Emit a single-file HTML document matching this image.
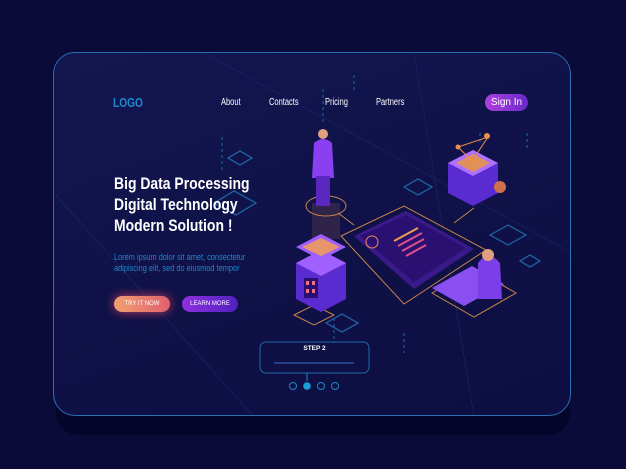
<!DOCTYPE html>
<html><head><meta charset="utf-8"><style>
body{margin:0;width:626px;height:469px;overflow:hidden;background:#0b0b3a;font-family:"Liberation Sans",sans-serif;position:relative}
.shadow{position:absolute;left:56px;top:70px;width:514px;height:365px;border-radius:22px;background:#05052a}
.card{position:absolute;left:53px;top:52px;width:518px;height:364px;border-radius:22px;border:1.5px solid #2a6fb0;background:linear-gradient(160deg,#141650 0%,#0f1148 50%,#0d0f42 100%);box-sizing:border-box;overflow:hidden}
.t{position:absolute;color:#fff;white-space:nowrap;transform-origin:0 0}
</style></head><body>
<div class="shadow"></div>
<div class="card">
<svg width="518" height="364" style="position:absolute;left:0;top:0">
<g stroke="#22307a" stroke-width="0.6" opacity="0.7"><line x1="150" y1="0" x2="518" y2="200"/><line x1="0" y1="140" x2="200" y2="364"/><line x1="360" y1="0" x2="420" y2="364"/></g>
<g fill="none" stroke="#1d6aa8" stroke-width="1.2">
<path d="M350 134 l14 -8 l14 8 l-14 8z"/><path d="M436 182 l18 -10 l18 10 l-18 10z"/><path d="M466 208 l10 -6 l10 6 l-10 6z"/><path d="M160 150 l20 -12 l22 12 l-20 12z"/><path d="M174 105 l12 -7 l12 7 l-12 7z"/><path d="M272 270 l16 -9 l16 9 l-16 9z"/>
</g>
<g stroke="#1d6aa8" stroke-width="1" stroke-dasharray="3 3"><line x1="300" y1="22" x2="300" y2="40"/><line x1="269" y1="36" x2="269" y2="72"/><line x1="426" y1="80" x2="426" y2="92"/><line x1="168" y1="84" x2="168" y2="118"/><line x1="280" y1="265" x2="280" y2="290"/><line x1="350" y1="280" x2="350" y2="300"/><line x1="473" y1="80" x2="473" y2="96"/></g>
<g fill="none" stroke="#c8844a" stroke-width="1"><path d="M287 183 L350 153 L432 197 L350 251z"/><ellipse cx="272" cy="153" rx="20" ry="10"/><path d="M284 160 L300 172"/><path d="M400 170 L420 155"/><path d="M378 240 l42 -24 l42 24 l-42 24z"/><path d="M240 262 l20 -10 l20 10 l-20 10z"/></g>
<path d="M300 183 L352 158 L420 196 L360 236z" fill="#3a1a8a"/>
<path d="M306 183 L352 162 L412 195 L360 229z" fill="#2a1070"/>
<g stroke="#e0508a" stroke-width="2"><line x1="344" y1="193" x2="368" y2="180"/><line x1="348" y1="198" x2="370" y2="186"/><line x1="352" y1="203" x2="372" y2="192"/></g>
<g stroke="#e9a050" stroke-width="2"><line x1="340" y1="188" x2="364" y2="175"/></g>
<circle cx="318" cy="189" r="6" fill="none" stroke="#e98a50"/>
<rect x="258" y="150" width="28" height="36" fill="#c87a50" opacity="0.18"/>
<path d="M260 90 q9-8 18 0 l2 35 h-22z" fill="#8a3ff0"/><rect x="262" y="123" width="14" height="30" fill="#5a28c0"/><circle cx="269" cy="81" r="5" fill="#e0a080"/>
<path d="M242 210 l25 -13 l25 13 v36 l-25 13 l-25 -13z" fill="#5a2bd0"/><path d="M242 210 l25 -13 l25 13 l-25 13z" fill="#a060ff"/>
<path d="M242 194 l25 -13 l25 13 l-25 13z" fill="#a060ff"/><path d="M248 194 l19 -9 l19 9 l-19 9z" fill="#e7956a"/><rect x="250" y="225" width="14" height="20" fill="#2a1070"/>
<g fill="#f07080"><rect x="252" y="228" width="3" height="4"/><rect x="258" y="228" width="3" height="4"/><rect x="252" y="236" width="3" height="4"/><rect x="258" y="236" width="3" height="4"/></g>
<path d="M394 110 l25 -13 l25 13 v30 l-25 13 l-25 -13z" fill="#5a2bd0"/><path d="M394 110 l25 -13 l25 13 l-25 13z" fill="#b070ff"/><path d="M402 110 l17 -9 l17 9 l-17 9z" fill="#e0905a"/>
<circle cx="446" cy="134" r="6" fill="#d0704a"/>
<path d="M418 108 l-14 -14 l30 -10 l-16 24" stroke="#e9904a" fill="none"/><circle cx="433" cy="83" r="3" fill="#e9904a"/><circle cx="404" cy="94" r="2.5" fill="#e9904a"/><circle cx="418" cy="108" r="3" fill="#e9904a"/>
<path d="M378 235 l40 -22 l32 18 l-40 22z" fill="#8a4ff0"/><path d="M424 210 q10-14 22 0 l2 36 h-24z" fill="#7a3fe8"/><circle cx="434" cy="202" r="6" fill="#e0a080"/>
<rect x="206" y="289" width="109" height="31" rx="6" fill="none" stroke="#1d6aa8"/>
<line x1="220" y1="310" x2="300" y2="310" stroke="#3a70c0" stroke-width="1"/>
<line x1="253" y1="320" x2="253" y2="328" stroke="#1d8ac8"/>
<g fill="none" stroke="#1d8ac8"><circle cx="239" cy="333" r="3.5"/><circle cx="267" cy="333" r="3.5"/><circle cx="281" cy="333" r="3.5"/></g><circle cx="253" cy="333" r="3.8" fill="#1aa0d8"/>
</svg>
<div class="t" style="left:59px;top:42px;font-size:13px;font-weight:bold;color:#1a8ad0;transform:scaleX(0.78)">LOGO</div>
<div class="t" style="left:167px;top:44px;font-size:10px;transform:scaleX(0.75)">About</div>
<div class="t" style="left:215px;top:44px;font-size:10px;transform:scaleX(0.75)">Contacts</div>
<div class="t" style="left:271px;top:44px;font-size:10px;transform:scaleX(0.75)">Pricing</div>
<div class="t" style="left:322px;top:44px;font-size:10px;transform:scaleX(0.75)">Partners</div>
<div class="t" style="left:431px;top:41px;width:43px;height:17px;border-radius:9px;background:linear-gradient(90deg,#b040e0,#6a28c8);font-size:10px;text-align:center;line-height:17px">Sign In</div>
<div class="t" style="left:60px;top:120px;font-size:17px;font-weight:bold;line-height:21px;transform:scaleX(0.82)">Big Data Processing<br>Digital Technology<br>Modern Solution !</div>
<div class="t" style="left:60px;top:199px;font-size:9px;line-height:11px;color:#1a8ad0;transform:scaleX(0.82)">Lorem ipsum dolor sit amet, consectetur<br>adipiscing elit, sed do eiusmod tempor</div>
<div class="t" style="left:60px;top:243px;width:56px;height:16px;border-radius:8px;background:linear-gradient(90deg,#f0a070,#e06070);font-size:6px;text-align:center;line-height:16px;box-shadow:0 0 10px #c04060">TRY IT NOW</div>
<div class="t" style="left:128px;top:243px;width:56px;height:16px;border-radius:8px;background:linear-gradient(90deg,#9030e0,#5020c0);font-size:6px;text-align:center;line-height:16px">LEARN MORE</div>
<div class="t" style="left:206px;top:292px;width:109px;text-align:center;font-size:6.5px;font-weight:bold">STEP 2</div>
</div>
</body></html>
